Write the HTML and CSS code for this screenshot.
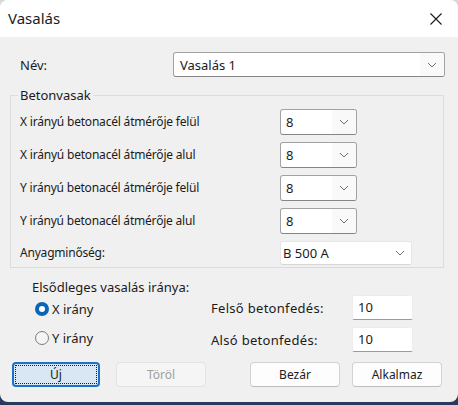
FILE: index.html
```html
<!DOCTYPE html>
<html lang="hu">
<head>
<meta charset="utf-8">
<title>Vasalás</title>
<link rel="stylesheet" href="styles.css">
</head>
<body>
<div class="window">
  <div class="titlebar">
    <span class="title">Vasalás</span>
    <svg class="close" width="12" height="12" viewBox="0 0 12 12"><path d="M0.5 0.5 L11.5 11.5 M11.5 0.5 L0.5 11.5" stroke="#1a1a1a" stroke-width="1.1" fill="none"/></svg>
  </div>
  <div class="content">
    <div class="name-row">
      <span class="lbl">Név:</span>
      <div class="combo combo-name"><span class="val">Vasalás 1</span><span class="drop"><svg width="10" height="6" viewBox="0 0 10 6"><path d="M1 1 L5 5 L9 1" stroke="#707070" stroke-width="1" fill="none"/></svg></span></div>
    </div>
    <fieldset class="group">
      <legend>Betonvasak</legend>
      <div class="group-grid">
        <span class="lbl glbl">X irányú betonacél átmérője felül</span>
        <div class="combo combo-small"><span class="val">8</span><span class="drop"><svg width="10" height="6" viewBox="0 0 10 6"><path d="M1 1 L5 5 L9 1" stroke="#707070" stroke-width="1" fill="none"/></svg></span></div>
        <span class="lbl glbl">X irányú betonacél átmérője alul</span>
        <div class="combo combo-small"><span class="val">8</span><span class="drop"><svg width="10" height="6" viewBox="0 0 10 6"><path d="M1 1 L5 5 L9 1" stroke="#707070" stroke-width="1" fill="none"/></svg></span></div>
        <span class="lbl glbl">Y irányú betonacél átmérője felül</span>
        <div class="combo combo-small"><span class="val">8</span><span class="drop"><svg width="10" height="6" viewBox="0 0 10 6"><path d="M1 1 L5 5 L9 1" stroke="#707070" stroke-width="1" fill="none"/></svg></span></div>
        <span class="lbl glbl">Y irányú betonacél átmérője alul</span>
        <div class="combo combo-small"><span class="val">8</span><span class="drop"><svg width="10" height="6" viewBox="0 0 10 6"><path d="M1 1 L5 5 L9 1" stroke="#707070" stroke-width="1" fill="none"/></svg></span></div>
        <span class="lbl glbl">Anyagminőség:</span>
        <div class="combo combo-flat"><span class="val">B 500 A</span><span class="drop"><svg width="10" height="6" viewBox="0 0 10 6"><path d="M1 1 L5 5 L9 1" stroke="#707070" stroke-width="1" fill="none"/></svg></span></div>
      </div>
    </fieldset>
    <div class="lower">
      <span class="heading">Elsődleges vasalás iránya:</span>
      <span class="radio radio-on"><span class="dot"></span>X irány</span>
      <span class="lbl wide">Felső betonfedés:</span>
      <div class="input">10</div>
      <span class="radio radio-off"><span class="dot"></span>Y irány</span>
      <span class="lbl wide row3">Alsó betonfedés:</span>
      <div class="input row3">10</div>
    </div>
    <div class="buttons">
      <button class="btn btn-focus"><span class="focus-ring">Új</span></button>
      <button class="btn btn-disabled" disabled>Töröl</button>
      <button class="btn btn-close">Bezár</button>
      <button class="btn btn-apply">Alkalmaz</button>
    </div>
  </div>
</div>
</body>
</html>
```

FILE: styles.css
```css
* { box-sizing: border-box; }
html, body { margin: 0; padding: 0; }
body {
  width: 458px;
  height: 405px;
  background: linear-gradient(to bottom, #d9d9d9 0, #d9d9d9 380px, #2a3a5c 380px);
  font-family: "Noto Sans", "Liberation Sans", sans-serif;
  font-size: 13px;
  color: #1b1b1b;
  overflow: hidden;
}
.window {
  width: 458px;
  height: 402px;
  background: #f0f0f0;
  border-radius: 8px;
  overflow: hidden;
}
.titlebar {
  height: 37px;
  background: #ffffff;
  display: flex;
  align-items: center;
  justify-content: space-between;
  padding: 0 16px 0 8px;
}
.title { font-size: 15px; line-height: 18px; margin-top: -1px; }
.close { display: block; }
.lbl { line-height: 16px; white-space: nowrap; }
.glbl { font-size: 12px; letter-spacing: -0.2px; }
.wide { letter-spacing: 0.3px; }

.name-row {
  display: grid;
  grid-template-columns: 153px 272px;
  align-items: center;
  margin: 15px 0 0 20px;
}
.combo {
  display: flex;
  align-items: center;
  background: #ffffff;
  border: 1px solid #a2a2a2;
  border-bottom-color: #858585;
  border-radius: 3px;
  overflow: hidden;
}
.combo .val { flex: 1; line-height: 16px; white-space: nowrap; }
.combo .drop {
  width: 24px;
  align-self: stretch;
  display: flex;
  align-items: center;
  justify-content: center;
  background: #f9f9f9;
}
.combo .drop svg { display: block; }
.combo-name { height: 25px; }
.combo-name .val { padding-left: 6px; }
.combo-small { height: 26px; }
.combo-small .val { padding-left: 5px; }
.combo-flat {
  height: 24px;
  border: 1px solid #e6e6e6;
  border-bottom-color: #d6d6d6;
  border-radius: 3px;
}
.combo-flat .val { padding-left: 2px; }
.combo-flat .drop { background: #ffffff; width: 22px; }

.group {
  margin: 10px 14px 0 10px;
  padding: 0 0 2px 9px;
  border: 1px solid #dcdcdc;
  min-width: 0;
}
.group legend {
  padding: 0 2px;
  margin-left: -2px;
  line-height: 16px;
}
.group-grid {
  display: grid;
  grid-template-columns: 260px 77px;
  grid-template-rows: 26px 26px 26px 26px 24px;
  row-gap: 7px;
  align-items: center;
  margin-top: 6px;
}
.group-grid .combo-flat { width: 132px; }

.lower {
  display: grid;
  grid-template-columns: 179px 141px 61px;
  grid-template-rows: 16px 25px 32px;
  align-items: center;
  margin: 11px 0 0 32px;
}
.heading { grid-column: 1 / 4; line-height: 16px; }
.row3 { margin-top: 7px; }
.radio {
  display: flex;
  align-items: center;
  line-height: 16px;
  margin-left: 3px;
}
.radio-on { margin-top: 3px; }
.radio-off { margin-top: 4px; }
.radio .dot {
  width: 14px;
  height: 14px;
  border-radius: 50%;
  margin-right: 3px;
  flex: none;
}
.radio-on .dot {
  background: #ffffff;
  border: 4px solid #0a64b8;
}
.radio-off .dot {
  background: #f4f4f4;
  border: 1px solid #7c7c7c;
}
.input {
  height: 25px;
  background: #ffffff;
  border: 1px solid #ececec;
  border-bottom-color: #9a9a9a;
  border-radius: 2px;
  padding-left: 5px;
  line-height: 23px;
}

.buttons {
  display: flex;
  margin: 10px 0 0 12px;
}
.btn {
  height: 25px;
  width: 90px;
  font-family: inherit;
  font-size: 12px;
  color: #1b1b1b;
  background: #fdfdfd;
  border: 1px solid #d2d2d2;
  border-bottom-color: #bdbdbd;
  border-radius: 4px;
  padding: 0;
  line-height: 16px;
}
.btn-focus {
  width: 88px;
  background: #d9e6f3;
  border: 2px solid #1a73c8;
  padding: 1px;
}
.focus-ring {
  display: flex;
  align-items: center;
  justify-content: center;
  height: 100%;
  border: 1px dotted #202020;
}
.btn-disabled {
  margin-left: 16px;
  background: #f5f5f5;
  border-color: #e3e3e3;
  color: #a0a0a0;
}
.btn-close { margin-left: 44px; }
.btn-apply { margin-left: 12px; }
```
